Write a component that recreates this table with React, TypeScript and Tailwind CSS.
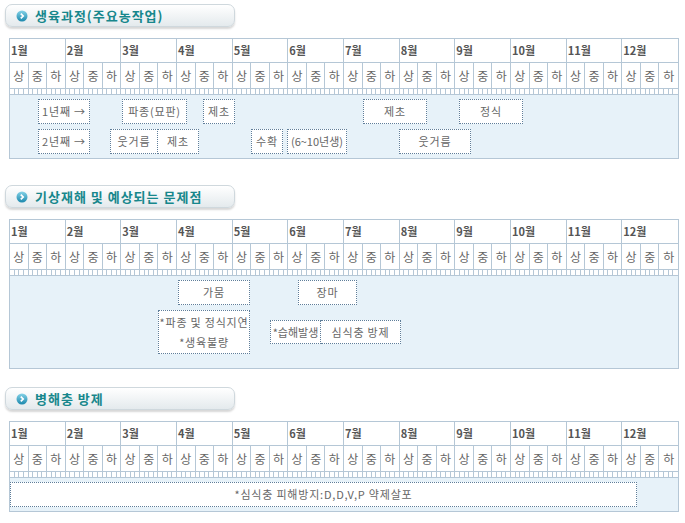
import type { ReactNode } from "react";

const MONTHS = ["1월", "2월", "3월", "4월", "5월", "6월", "7월", "8월", "9월", "10월", "11월", "12월"];
const TENS = ["상", "중", "하"];

function Bullet() {
  return (
    <svg width="12" height="12" viewBox="0 0 12 12" className="shrink-0">
      <defs>
        <linearGradient id="bullet-fill" x1="0" y1="0" x2="0" y2="1">
          <stop offset="0" stopColor="#86d3e8" />
          <stop offset="1" stopColor="#1b88ad" />
        </linearGradient>
      </defs>
      <circle cx="6" cy="6" r="5.5" fill="url(#bullet-fill)" />
      <path d="M4.8 3.6 L7.2 6 L4.8 8.4" stroke="#fff" strokeWidth="1.7" fill="none" />
    </svg>
  );
}

function SectionTitle({ children, className }: { children: ReactNode; className: string }) {
  return (
    <div
      className={
        "ml-[5px] flex h-[23px] w-[230px] items-center rounded-[7px] border border-[#cfd8dd] bg-gradient-to-b from-white to-[#e4eaed] pl-[10px] shadow-[0_2px_2px_rgba(0,0,0,0.16)] " +
        className
      }
    >
      <Bullet />
      <span className="ml-[7px] text-[13px] leading-none font-bold tracking-[1px] text-[#17878c]">
        {children}
      </span>
    </div>
  );
}

function Box({ className, children }: { className: string; children: ReactNode }) {
  return (
    <div
      className={
        "flex shrink-0 items-center justify-center border border-dotted border-[#5f7e9a] bg-white text-[11px] whitespace-nowrap text-[#666] " +
        className
      }
    >
      {children}
    </div>
  );
}

function Calendar({ children, className }: { children: ReactNode; className: string }) {
  return (
    <div className={"ml-[9px] w-[670px] border border-[#b5c7d6] bg-white " + className}>
      <div className="grid h-[24px] grid-cols-12 border-b border-[#b5c7d6]">
        {MONTHS.map((m, i) => (
          <div
            key={m}
            className={
              i < 11
                ? "flex items-center border-r border-[#b5c7d6] pl-[1px] text-[11px] font-bold text-[#555]"
                : "flex items-center pl-[1px] text-[11px] font-bold text-[#555]"
            }
          >
            {m}
          </div>
        ))}
      </div>
      <div className="grid h-[26px] grid-cols-[repeat(36,minmax(0,1fr))] border-b border-[#b5c7d6]">
        {MONTHS.flatMap((m) =>
          TENS.map((t) => (
            <div
              key={m + t}
              className={
                m === "12월" && t === "하"
                  ? "flex items-center justify-center text-[12px] text-[#666]"
                  : "flex items-center justify-center border-r border-[#b5c7d6] text-[12px] text-[#666]"
              }
            >
              {t}
            </div>
          )),
        )}
      </div>
      <div className="grid h-[6px] grid-cols-[repeat(144,minmax(0,1fr))] border-b border-[#b5c7d6]">
        {Array.from({ length: 144 }, (_, i) => (
          <div key={i} className={i < 143 ? "border-r border-[#b5c7d6]" : ""} />
        ))}
      </div>
      <div className="bg-[#e7f2f9]">{children}</div>
    </div>
  );
}

export default function App() {
  return (
    <div className="flex h-[523px] w-[685px] flex-col bg-white font-['Noto_Sans_CJK_KR',sans-serif]">
      <SectionTitle className="mt-[4px]">생육과정(주요농작업)</SectionTitle>
      <Calendar className="mt-[11px]">
        <div className="flex flex-col gap-[5px] pt-[4px] pb-[4px]">
          <div className="flex h-[25px]">
            <Box className="ml-[28px] w-[52px] tracking-[0.8px]">1년째 →</Box>
            <Box className="ml-[32px] w-[65px] tracking-[0.8px]">파종(묘판)</Box>
            <Box className="ml-[16px] w-[32px] tracking-[0.8px]">제초</Box>
            <Box className="ml-[128px] w-[64px] tracking-[0.8px]">제초</Box>
            <Box className="ml-[32px] w-[64px] tracking-[0.8px]">정식</Box>
          </div>
          <div className="flex h-[25px]">
            <Box className="ml-[28px] w-[52px] tracking-[0.8px]">2년째 →</Box>
            <Box className="ml-[20px] w-[48px] tracking-[0.8px]">웃거름</Box>
            <Box className="w-[41px] border-l-0 tracking-[0.8px]">제초</Box>
            <Box className="ml-[52px] w-[32px] tracking-[0.8px]">수확</Box>
            <Box className="ml-[4px] w-[60px]">(6~10년생)</Box>
            <Box className="ml-[52px] w-[72px] tracking-[0.8px]">웃거름</Box>
          </div>
        </div>
      </Calendar>

      <SectionTitle className="mt-[26px]">기상재해 및 예상되는 문제점</SectionTitle>
      <Calendar className="mt-[11px]">
        <div className="flex flex-col gap-[5px] pt-[4px] pb-[14px]">
          <div className="flex h-[25px]">
            <Box className="ml-[168px] w-[72px] tracking-[0.8px]">가뭄</Box>
            <Box className="ml-[48px] w-[59px] tracking-[0.8px]">장마</Box>
          </div>
          <div className="flex items-center">
            <Box className="ml-[148px] h-[44px] w-[92px] flex-col tracking-[0.8px]">
              <span className="block leading-[20px]">*파종 및 정식지연</span>
              <span className="block leading-[20px]">*생육불량</span>
            </Box>
            <Box className="ml-[20px] h-[24px] w-[51px]">*습해발생</Box>
            <Box className="h-[24px] w-[80px] border-l-0 tracking-[0.8px]">심식충 방제</Box>
          </div>
        </div>
      </Calendar>

      <SectionTitle className="mt-[18px]">병해충 방제</SectionTitle>
      <Calendar className="mt-[11px]">
        <div className="flex pt-[4px] pb-[4px]">
          <Box className="h-[25px] w-[627px] tracking-[0.8px]">*심식충 피해방지:D,D,V,P 약제살포</Box>
        </div>
      </Calendar>
    </div>
  );
}
